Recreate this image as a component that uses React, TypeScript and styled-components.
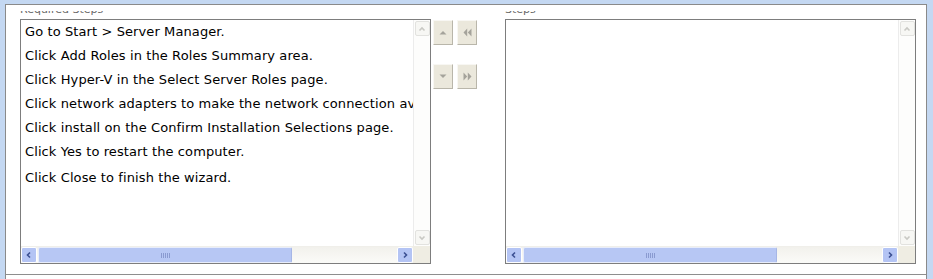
import React from "react";
import styled, { createGlobalStyle } from "styled-components";

const Global = createGlobalStyle`
  html, body { margin: 0; padding: 0; background: #c4d8f2; }
  body { width: 933px; height: 279px; overflow: hidden; font-family: "DejaVu Sans", Verdana, sans-serif; }
`;

const Frame = styled.div`
  box-sizing: border-box;
  margin: 4px 0 0 5px;
  width: 922px;
  height: 275px;
  background: #ffffff;
  border: 1px solid #8a8a8a;
  border-bottom: none;
`;

const Content = styled.div`
  box-sizing: content-box;
  height: 269px;
  border-bottom: 1px solid #8e8e8e;
  display: flex;
  padding-left: 14px;
`;

const Column = styled.div`
  display: flex;
  flex-direction: column;
`;

const Label = styled.div`
  height: 4px;
  margin: 6px 0 4px 0;
  overflow: hidden;
  display: flex;
  align-items: flex-end;
  font-size: 11px;
  line-height: 11px;
  color: #6a6a6a;
  white-space: nowrap;
`;

const ListBox = styled.div`
  box-sizing: border-box;
  width: 411px;
  height: 245px;
  border: 1px solid #7d7d7d;
  background: #fff;
  display: grid;
  grid-template-columns: 1fr 17px;
  grid-template-rows: 1fr 17px;
`;

const Items = styled.div`
  overflow: hidden;
  padding: 0 0 0 4px;
`;

const Item = styled.div<{ $extra?: number }>`
  height: 24px;
  line-height: 24px;
  margin-top: ${(p) => p.$extra ?? 0}px;
  font-size: 13px;
  letter-spacing: 0.1px;
  color: #000;
  white-space: nowrap;
`;

const VTrack = styled.div`
  border-left: 1px solid #ececec;
  background: #fdfdfc;
  display: flex;
  flex-direction: column;
  justify-content: space-between;
  align-items: center;
  padding: 1px 0 1px 0;
`;

const VBtn = styled.div`
  box-sizing: border-box;
  width: 15px;
  height: 15px;
  border: 1px solid #e2e2df;
  border-radius: 2px;
  background: #f7f7f4;
  display: flex;
  align-items: center;
  justify-content: center;
`;

const HTrack = styled.div`
  background: linear-gradient(#f2f1ec, #fbfbf8);
  border-top: 1px solid #f0efea;
  display: flex;
  align-items: stretch;
`;

const HBtn = styled.div`
  box-sizing: border-box;
  width: 16px;
  height: 16px;
  border: 1px solid #ffffff;
  border-radius: 2px;
  background: #b4c4f4;
  display: flex;
  align-items: center;
  justify-content: center;
  flex: none;
`;

const Thumb = styled.div<{ $w: number }>`
  box-sizing: border-box;
  width: ${(p) => p.$w}px;
  margin-left: 1px;
  height: 16px;
  background: #b7c7f4;
  border: 1px solid #e8edfb;
  border-right-color: #a6b6e6;
  border-radius: 2px;
  display: flex;
  align-items: center;
  justify-content: center;
  flex: none;
`;

const Spacer = styled.div`
  flex: 1;
`;

const Corner = styled.div`
  background: #efede3;
`;

const Buttons = styled.div`
  display: grid;
  grid-template-columns: 20px 20px;
  column-gap: 4px;
  row-gap: 19px;
  margin: 15px 28px 0 2px;
  align-content: start;
`;

const MoveBtn = styled.div`
  box-sizing: border-box;
  width: 20px;
  height: 25px;
  background: #ebe8dc;
  border: 1px solid;
  border-color: #f8f7f3 #b9b6aa #b9b6aa #f8f7f3;
  display: flex;
  align-items: center;
  justify-content: center;
`;

const Grip = () => (
  <svg width="9" height="5" viewBox="0 0 9 5">
    {[0, 2, 4, 6, 8].map((x) => (
      <rect key={x} x={x} y="0" width="1" height="5" fill="#8a9ad0" />
    ))}
  </svg>
);

const Chevron = ({ dir, color, size = 8 }: { dir: "up" | "down" | "left" | "right"; color: string; size?: number }) => {
  const d = {
    up: "M1.5 5.5 L4 3 L6.5 5.5",
    down: "M1.5 2.5 L4 5 L6.5 2.5",
    left: "M5 1.5 L2.5 4 L5 6.5",
    right: "M3 1.5 L5.5 4 L3 6.5",
  }[dir];
  return (
    <svg width={size} height={size} viewBox="0 0 8 8">
      <path d={d} fill="none" stroke={color} strokeWidth="1.6" />
    </svg>
  );
};

const Tri = ({ dir }: { dir: "up" | "down" }) => (
  <svg width="8" height="5" viewBox="0 0 8 5">
    <path d={dir === "up" ? "M0.5 4.5 L4 1 L7.5 4.5 Z" : "M0.5 0.5 L4 4 L7.5 0.5 Z"} fill="#a5a39b" />
  </svg>
);

const Double = ({ dir }: { dir: "left" | "right" }) => (
  <svg width="9" height="9" viewBox="0 0 9 9">
    {dir === "left" ? (
      <path d="M4.2 0.5 L0.5 4.5 L4.2 8.5 Z M8.5 0.5 L4.8 4.5 L8.5 8.5 Z" fill="#a5a39b" />
    ) : (
      <path d="M0.5 0.5 L4.2 4.5 L0.5 8.5 Z M4.8 0.5 L8.5 4.5 L4.8 8.5 Z" fill="#a5a39b" />
    )}
  </svg>
);

const Box = ({ items }: { items: string[] }) => (
  <ListBox>
    <Items>
      {items.map((t, i) => (
        <Item key={i} $extra={i === items.length - 1 && items.length > 1 ? 2 : 0}>
          {t}
        </Item>
      ))}
    </Items>
    <VTrack>
      <VBtn>
        <Chevron dir="up" color="#c9c9c4" />
      </VBtn>
      <VBtn>
        <Chevron dir="down" color="#c9c9c4" />
      </VBtn>
    </VTrack>
    <HTrack>
      <HBtn>
        <Chevron dir="left" color="#3c4f92" />
      </HBtn>
      <Thumb $w={254}>
        <Grip />
      </Thumb>
      <Spacer />
      <HBtn>
        <Chevron dir="right" color="#3c4f92" />
      </HBtn>
    </HTrack>
    <Corner />
  </ListBox>
);

const steps = [
  "Go to Start > Server Manager.",
  "Click Add Roles in the Roles Summary area.",
  "Click Hyper-V in the Select Server Roles page.",
  "Click network adapters to make the network connection available to virtual machines.",
  "Click install on the Confirm Installation Selections page.",
  "Click Yes to restart the computer.",
  "Click Close to finish the wizard.",
];

export default function App() {
  return (
    <>
      <Global />
      <Frame>
        <Content>
          <Column>
            <Label>Required Steps</Label>
            <Box items={steps} />
          </Column>
          <Buttons>
            <MoveBtn>
              <Tri dir="up" />
            </MoveBtn>
            <MoveBtn>
              <Double dir="left" />
            </MoveBtn>
            <MoveBtn>
              <Tri dir="down" />
            </MoveBtn>
            <MoveBtn>
              <Double dir="right" />
            </MoveBtn>
          </Buttons>
          <Column>
            <Label>Steps</Label>
            <Box items={[]} />
          </Column>
        </Content>
      </Frame>
    </>
  );
}
